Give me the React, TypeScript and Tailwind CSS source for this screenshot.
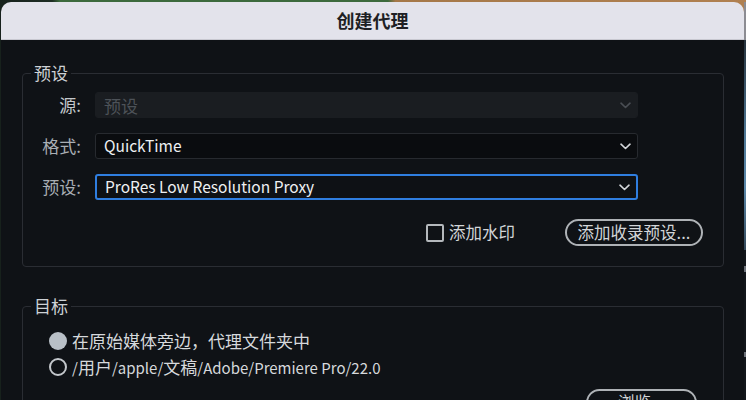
import React from "react";

const font = { fontFamily: '"Noto Sans CJK SC", "Noto Sans", sans-serif' };

const Chevron: React.FC<{ dim?: boolean }> = ({ dim }) => (
  <svg width="11" height="7" viewBox="0 0 11 7" className="shrink-0">
    <path
      d="M1 1.2 L5.5 5.5 L10 1.2"
      fill="none"
      stroke={dim ? "#4a4e54" : "#d4d7db"}
      strokeWidth="1.6"
      strokeLinecap="round"
      strokeLinejoin="round"
    />
  </svg>
);

interface SelectRowProps {
  label: string;
  value: string;
  variant: "disabled" | "normal" | "focused";
}

const SelectRow: React.FC<SelectRowProps> = ({ label, value, variant }) => {
  const box =
    variant === "disabled"
      ? "bg-[#1a1d21] border border-[#1a1d21] text-[#4d5258] text-[17px]"
      : variant === "focused"
        ? "bg-[#0e1115] border-2 border-[#2f7ee0] text-[#eef0f2] text-[15.5px]"
        : "bg-[#0a0c0f] border border-[#272a2f] text-[#eef0f2] text-[15.5px]";
  return (
    <div className="flex items-center h-[26px]">
      <div
        className={`w-[58px] text-right text-[17px] ${
          variant === "disabled" ? "text-[#c4c8cc]" : "text-[#a9aeb4]"
        }`}
      >
        {label}
      </div>
      <div
        className={`ml-[14px] w-[543px] h-[26px] rounded-[3px] flex items-center justify-between pl-[8px] pr-[6px] ${box}`}
      >
        <span className="leading-none">{value}</span>
        <Chevron dim={variant === "disabled"} />
      </div>
    </div>
  );
};

const Radio: React.FC<{ checked?: boolean; children: React.ReactNode }> = ({ checked, children }) => (
  <div className="flex items-center h-[26px]">
    {checked ? (
      <span className="w-[18px] h-[18px] rounded-full bg-[#b9c0c7]" />
    ) : (
      <span className="w-[18px] h-[18px] rounded-full border-2 border-[#c3c7cb]" />
    )}
    <span className="ml-[5px] text-[17px] text-[#d6d9dc]">{children}</span>
  </div>
);

export default function App() {
  return (
    <div
      className="w-[746px] h-[400px] overflow-hidden flex flex-col bg-[linear-gradient(90deg,#17211c_0%,#1e2e24_7%,#3c6a3c_8%,#3c6a3c_52%,#a57848_53%,#b08050_100%)]"
      style={font}
    >
      <div className="h-[2px] shrink-0" />
      <div className="flex flex-1 min-h-0">
        <div className="ml-[1px] w-[743px] rounded-t-[10px] overflow-hidden flex flex-col">
          <div className="h-[38px] shrink-0 bg-[#e3e3eb] border-b border-[#c8c8d0] flex items-center justify-center">
            <span className="text-[18px] font-bold text-[#1e1f24]">创建代理</span>
          </div>
          <div className="flex-1 bg-[#0f1216] pl-[21px] pr-[20px] pt-[21px]">
            <fieldset className="border border-[#2a2d33] rounded-[4px] px-0 pb-[20px]">
              <legend className="ml-[8px] px-[3px] text-[17px] leading-6 text-[#cdd1d5]">预设</legend>
              <div className="mt-[7px] flex flex-col gap-[15px]">
                <SelectRow label="源:" value="预设" variant="disabled" />
                <SelectRow label="格式:" value="QuickTime" variant="normal" />
                <SelectRow label="预设:" value="ProRes Low Resolution Proxy" variant="focused" />
              </div>
              <div className="mt-[19px] flex items-center justify-end pr-[20px]">
                <div className="flex items-center">
                  <span className="w-[18px] h-[18px] border-2 border-[#b4b8bc] rounded-[2px]" />
                  <span className="ml-[5px] text-[16.5px] text-[#d2d5d8]">添加水印</span>
                </div>
                <button className="ml-[50px] w-[138px] h-[27px] rounded-full border-2 border-[#aeb2b6] text-[16.5px] text-[#d2d5d8] flex items-center justify-center leading-none">
                  添加收录预设...
                </button>
              </div>
            </fieldset>
            <fieldset className="mt-[27px] border border-[#2a2d33] rounded-[4px] px-0 pb-[20px]">
              <legend className="ml-[8px] px-[3px] text-[17px] leading-6 text-[#cdd1d5]">目标</legend>
              <div className="mt-[10px] pl-[26px] flex flex-col">
                <Radio checked>在原始媒体旁边，代理文件夹中</Radio>
                <Radio>
                  <span className="text-[15px]">/</span>用户<span className="text-[15px]">/apple/</span>文稿
                  <span className="text-[15px]">/Adobe/Premiere Pro/22.0</span>
                </Radio>
              </div>
              <div className="mt-[9px] flex justify-end pr-[26px]">
                <button className="w-[111px] h-[27px] rounded-full border-2 border-[#aeb2b6] text-[16.5px] text-[#d2d5d8] flex items-center justify-center leading-none">
                  浏览...
                </button>
              </div>
            </fieldset>
          </div>
        </div>
        <div className="w-[2px] flex flex-col bg-[#12161b]">
          <div className="h-[38px] bg-[#8c8c92]" />
          <div className="h-[210px] bg-[linear-gradient(180deg,#26323c_0%,#4f7896_45%,#5b88aa_70%,#34495a_100%)]" />
          <div className="h-[16px]" />
          <div className="h-[6px] bg-[#6b7078]" />
          <div className="h-[80px]" />
          <div className="h-[5px] bg-[#6b7078]" />
        </div>
      </div>
    </div>
  );
}
